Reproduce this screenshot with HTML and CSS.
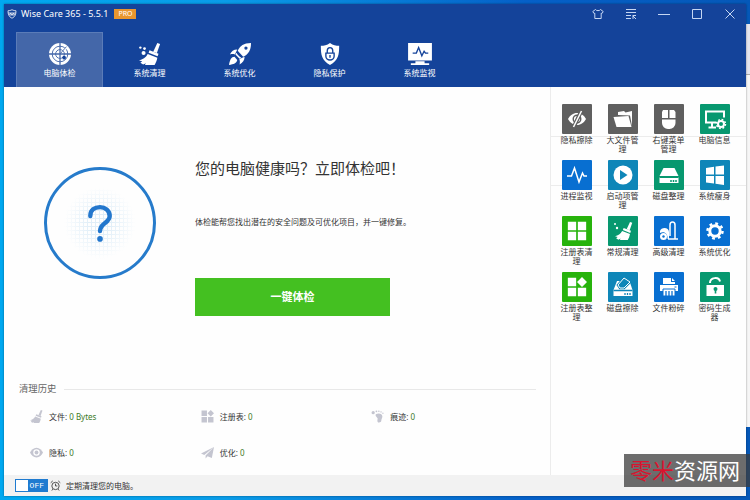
FILE: index.html
```html
<!DOCTYPE html>
<html lang="zh-CN">
<head>
    <meta charset="UTF-8">
    <meta name="viewport" content="width=device-width, initial-scale=1.0">
    <title>Wise Care 365</title>
    <link rel="stylesheet" href="styles.css">
</head>
<body>
<svg class="sprite" aria-hidden="true">
    <!-- 共用圖示 -->
    <symbol id="i-broom" viewBox="0 0 24 24">
        <path d="M20 0l3 1-3.500 10-4-1.500z"/>
        <path d="M11.500 8l9.800 3.700-1 2.800-9.800-3.800z"/>
        <path d="M9.500 12l10.500 4c-.5 3-1.500 5.500-3 8H6.500l1-2-3 1.500-3-2 2-1.500-3.500-1c4-1 7.500-3 9.500-7z"/>
    </symbol>
    <symbol id="i-grid" viewBox="0 0 24 24">
        <path d="M1 1h10v10H1zM13 1h10v10H13zM1 13h10v10H1zM13 13h10v10H13z"/>
    </symbol>
    <symbol id="i-blocks" viewBox="0 0 24 24">
        <path d="M1 1h10v10H1zM1 13h10v10H1zM13 13h10v10H13zM18 0l6 6-6 6-6-6z"/>
    </symbol>
</svg>

<div class="behind"></div>

<div class="window">
    <header>
        <div class="titlebar">
            <svg class="logo" viewBox="0 0 20 20"><path d="M10 1.500c3 1.500 5.500 2 8 2 0 7-1.500 12-8 15-6.500-3-8-8-8-15 2.500 0 5-.5 8-2z" fill="none" stroke="#fff" stroke-width="1.500"/><path d="M2 8h16M5 12l2-4 3 4 3-4 2 4z" fill="none" stroke="#fff" stroke-width="1.500"/></svg>
            <h1>Wise Care 365 - 5.5.1</h1>
            <span class="pro">PRO</span>
            <div class="controls">
                <button aria-label="皮肤"><svg viewBox="0 0 12 12"><path d="M3.500 1.500L.8 3.500l1.200 2 .8-.3v5.300h6.400V5.200l.8.3 1.200-2-2.700-2C8 3 4 3 3.500 1.500z"/></svg></button>
                <button aria-label="菜单"><svg viewBox="0 0 12 12"><path d="M1 1.500h10M1 4.500h10M1 7.500h5M1 10.500h5M7.500 7.500h3.500M8 11V8l3 3"/></svg></button>
                <button aria-label="最小化"><svg viewBox="0 0 12 12"><path d="M0 6.500h12"/></svg></button>
                <button aria-label="最大化"><svg viewBox="0 0 12 12"><path d="M1.500 1.500h9v9h-9z"/></svg></button>
                <button aria-label="关闭"><svg viewBox="0 0 12 12"><path d="M1.500 1.500l9 9M10.500 1.500l-9 9"/></svg></button>
            </div>
        </div>
        <nav>
            <button class="tab active">
                <svg viewBox="0 0 24 24"><circle cx="12" cy="12" r="12" fill="#fff"/><g fill="none" stroke="#4467a9"><circle cx="12" cy="12" r="8.500"/><circle cx="12" cy="12" r="4.800"/><path d="M12 0v24M0 12h24" stroke-width="1.400"/></g><path d="M13 11l5-7 2 2z" fill="#fff"/><path d="M12 12l7-8" stroke="#4467a9"/><circle cx="16.500" cy="16" r="2" fill="#16449b"/></svg>
                电脑体检
            </button>
            <button class="tab">
                <svg viewBox="0 0 24 24" fill="#fff"><use href="#i-broom"/><circle cx="1.500" cy="5" r="1.300"/><circle cx="6" cy="6" r="1.500"/><circle cx="5" cy="11" r="2.200"/></svg>
                系统清理
            </button>
            <button class="tab">
                <svg viewBox="0 0 24 24" fill="#fff"><path d="M24 0c-8 .3-12 3-14.500 8.500l6 6.500C21.500 12 24 8 24 0z"/><circle cx="18.500" cy="5.500" r="1.800" fill="#16449b"/><path d="M9 7c-4 0-6.500 2-8 5.500 2-.5 4-.5 5.500 0zM17 15c0 4-2 6.500-5.500 8.500.5-2 .5-4-.2-6z"/><path d="M8 10.500c1.500 2.500 3 4 5.500 5.500l-2 1.200-4.500-4.700zM6 15c-3.500 0-5 3-6 9 5-1 8.500-2 9-5.500z"/></svg>
                系统优化
            </button>
            <button class="tab">
                <svg viewBox="0 0 24 24"><path d="M12 0c3.500 2.500 6.500 3 10 3 0 10-1 16-10 21C3 19 2 13 2 3c3.500 0 6.500-.5 10-3z" fill="#fff"/><path d="M9 11V8.500a3 3.500 0 0 1 6 0V11M7.500 11h9v3.500a4.500 4 0 0 1-9 0zM12 13v3" fill="none" stroke="#16449b" stroke-width="1.500"/></svg>
                隐私保护
            </button>
            <button class="tab">
                <svg class="wide" viewBox="0 0 28 24"><path d="M1 0h26v19H1zM4 22h20v2H4zM9 20h10v2H9z" fill="#fff"/><path d="M6 11h4l2.500-6 3.500 9 2.500-5 1.500 2h3" fill="none" stroke="#16449b" stroke-width="1.500"/></svg>
                系统监视
            </button>
        </nav>
    </header>

    <div class="content">
        <main>
            <section class="hero">
                <div class="status">
                    <svg viewBox="0 0 34 44"><path d="M6 14C6 7 11 4 17 4s11 4 11 10c0 8-11 8-11 17" fill="none" stroke="#2377cd" stroke-width="5" stroke-linecap="round"/><circle cx="17" cy="40" r="3.200" fill="#2377cd"/></svg>
                </div>
                <div class="intro">
                    <h2>您的电脑健康吗？立即体检吧！</h2>
                    <p>体检能帮您找出潜在的安全问题及可优化项目，并一键修复。</p>
                    <button class="btn">一键体检</button>
                </div>
            </section>

            <section class="history">
                <h3>清理历史</h3>
                <ul>
                    <li><svg viewBox="0 0 24 24"><use href="#i-broom"/></svg>文件: <b>0 Bytes</b></li>
                    <li><svg viewBox="0 0 24 24"><use href="#i-blocks"/></svg>注册表: <b>0</b></li>
                    <li><svg viewBox="0 0 24 24"><circle cx="4" cy="5" r="3"/><circle cx="10" cy="2.500" r="1.600"/><circle cx="14.500" cy="2.500" r="1.400"/><circle cx="18.500" cy="3.500" r="1.300"/><circle cx="22" cy="6" r="1.200"/><path d="M9 8c4-3 12-2 12 4 0 3-2 4-2 8 0 3-6 5-7 1-.8-3 1-4 0-6s-5-4-3-7z"/></svg>痕迹: <b>0</b></li>
                    <li><svg viewBox="0 0 24 24"><path d="M12 3c5.500 0 9.500 4 12 9-2.500 5-6.500 9-12 9S2.500 17 0 12c2.500-5 6.500-9 12-9z"/><circle cx="12" cy="12" r="6" fill="#fff"/><circle cx="12" cy="12" r="3.500"/></svg>隐私: <b>0</b></li>
                    <li><svg viewBox="0 0 24 24"><path d="M24 2L0 14l6 2.500zM24 2L8.500 17.500V23l3.500-4 8 3z"/></svg>优化: <b>0</b></li>
                </ul>
            </section>
        </main>

        <aside>
            <button class="tile"><svg class="gray" viewBox="0 0 30 30"><path d="M15 9c4 0 7 2.500 9 6-2 3.500-5 6-9 6s-7-2.500-9-6c2-3.500 5-6 9-6z"/><circle cx="15" cy="15" r="3.800" fill="none" stroke="#5f5f5f" stroke-width="1.400"/><path d="M19.500 6.500l-8 17" stroke="#5f5f5f" stroke-width="4"/><path d="M19.500 7l-8 16" stroke="#fff" stroke-width="1.500"/></svg>隐私擦除</button>
            <button class="tile"><svg class="gray" viewBox="0 0 30 30"><path d="M10 11V8l6-1 1.500 1.500L24 7v15l-2-10.500z"/><path d="M5.500 13l15-1 3 11H8.500z"/></svg>大文件管理</button>
            <button class="tile"><svg class="gray" viewBox="0 0 30 30"><path d="M9 6h5v8H8V8zM15.500 6h4.500l1.500 2v6h-6zM8 15.500h13.500V19a6 6 0 0 1-6 6H14a6 6 0 0 1-6-6z"/></svg>右键菜单管理</button>
            <button class="tile"><svg class="teal" viewBox="0 0 30 30"><path d="M16 18.500H6V7.500h18v6M12 19v4M8.500 23.500H16" fill="none" stroke="#fff" stroke-width="2"/><circle cx="21" cy="20" r="3" fill="none" stroke="#fff" stroke-width="2"/><circle cx="21" cy="20" r="4.500" fill="none" stroke="#fff" stroke-width="1.500" stroke-dasharray="1.800 1.734"/></svg>电脑信息</button>
            <button class="tile"><svg class="blue" viewBox="0 0 30 30"><path d="M5 16h4.500l3-8 4.500 14 3.500-9 1.500 3H25" fill="none" stroke="#fff" stroke-width="1.500"/></svg>进程监视</button>
            <button class="tile"><svg class="cyan" viewBox="0 0 30 30"><circle cx="15" cy="15" r="9.500"/><path d="M12 10l7.500 5-7.500 5z" fill="#0e86b8"/></svg>启动项管理</button>
            <button class="tile"><svg class="teal" viewBox="0 0 30 30"><path d="M9.500 8h11l4 8h-19zM5.500 17h19v6h-19z"/><path d="M5.500 17.500h19" stroke="#07986f"/><path d="M17 20v2M19.500 20v2M22 20v2" stroke="#07986f" stroke-width="1.500"/></svg>磁盘整理</button>
            <button class="tile"><svg class="cyan" viewBox="0 0 30 30"><path d="M6 8l8-1.200V14.500H6zM15.500 6.500L24 5.500v9h-8.500zM6 16h8v7.500L6 22.500zM15.500 16H24v9l-8.500-1.300z"/></svg>系统瘦身</button>
            <button class="tile"><svg class="green" viewBox="0 0 30 30"><use href="#i-grid" x="5" y="5" width="20" height="20"/></svg>注册表清理</button>
            <button class="tile"><svg class="teal" viewBox="0 0 30 30"><use href="#i-broom" x="7" y="6" width="18" height="18"/><circle cx="7" cy="8" r="1"/><circle cx="9" cy="12" r="1.200"/></svg>常规清理</button>
            <button class="tile"><svg class="blue" viewBox="0 0 30 30"><path d="M14 23h10M16 20V9c0-4 5-4 5 0v14" fill="none" stroke="#fff" stroke-width="1.500"/><path d="M6 17v-2c1-4 9-4 9 1v7h-1.500C14 17 10 15 6 17z"/><circle cx="9.500" cy="20.500" r="3.500"/><circle cx="9.500" cy="20.500" r="1.200" fill="#086fd1"/></svg>高级清理</button>
            <button class="tile"><svg class="blue" viewBox="0 0 30 30"><circle cx="15" cy="15" r="5.200" fill="none" stroke="#fff" stroke-width="3"/><circle cx="15" cy="15" r="7.500" fill="none" stroke="#fff" stroke-width="2.500" stroke-dasharray="2.800 3.090"/></svg>系统优化</button>
            <button class="tile"><svg class="green" viewBox="0 0 30 30"><use href="#i-blocks" x="5" y="5" width="20" height="20"/></svg>注册表整理</button>
            <button class="tile"><svg class="cyan" viewBox="0 0 30 30"><path d="M9 9l-3.500 9v6h19v-6L21.500 9"/><path d="M5.500 18.500h19M17 21v2M19.500 21v2M22 21v2" stroke="#0e86b8" stroke-width="1.300"/><path d="M10 13l6-7 6 4-6 6h-4z" stroke="#0e86b8" stroke-width="2.500"/><path d="M10 13l6-7 6 4-6 6h-4z" fill="#0e86b8" stroke="#fff"/></svg>磁盘擦除</button>
            <button class="tile"><svg class="blue" viewBox="0 0 30 30"><path d="M9 6h8v4h4v2H9zM18 6l3 3h-3zM6 13h18v6H6z"/><path d="M9 17h12v7H9z" stroke="#086fd1"/><path d="M12 19v6M15 19v6M18 19v6" stroke="#086fd1" stroke-width="1.300"/><path d="M20.500 15h2" stroke="#086fd1"/></svg>文件粉碎</button>
            <button class="tile"><svg class="teal" viewBox="0 0 30 30"><path d="M10 11c0-6 9-6.500 10-1.500" fill="none" stroke="#fff" stroke-width="2"/><path d="M6.500 13h17.500v11H6.500z"/><circle cx="15.500" cy="17" r="2" fill="#07986f"/><path d="M15.500 17v4.500" stroke="#07986f" stroke-width="1.600"/></svg>密码生成器</button>
        </aside>
    </div>

    <footer>
        <label class="schedule">
            <input type="checkbox">
            <span class="switch">OFF</span>
            <svg viewBox="0 0 12 12"><circle cx="6" cy="6.500" r="4"/><path d="M6 4v2.500h2M.8 3L3 1M11.200 3L9 1M3 10l-1 1.500M9 10l1 1.500"/></svg>
            定期清理您的电脑。
        </label>
    </footer>
</div>

<div class="watermark"><em>零米</em>资源网</div>
</body>
</html>
```
FILE: styles.css
```css
* {
    box-sizing: border-box;
}
body {
    font-family: "Noto Sans", "Noto Sans CJK SC", sans-serif;
    font-size: 8px;
    line-height: 12px;
    color: #333;
    background: linear-gradient(90deg, #00a8f0, #0a9ce8 30%, #0560c8 70%, #0558b8);
    margin: 0;
    padding: 4px;
    min-height: 100vh;
    display: flex;
}
h1, h2, h3, p, ul {
    margin: 0;
    padding: 0;
    font-weight: normal;
}
button {
    font: inherit;
    color: inherit;
    background: none;
    border: none;
    padding: 0;
    cursor: pointer;
}
.sprite {
    position: absolute;
    width: 0;
    height: 0;
}
/* 後方的視窗邊緣 */
.behind {
    position: absolute;
    top: 24px;
    right: 0;
    bottom: 73px;
    width: 20px;
    background: linear-gradient(#e4e5ef 50px, #aaa 50px, #aaa 51px, #f6f6f6 51px);
}
.window {
    position: relative;
    flex: 1;
    display: flex;
    flex-direction: column;
    background: #fefefe;
    box-shadow: 0 0 2px rgba(0, 0, 0, 0.4);
}
header {
    background: #14439a;
    color: #fff;
}
.titlebar {
    display: flex;
    align-items: center;
    height: 20px;
    padding: 0 0 0 3px;
}
.logo {
    width: 10px;
    height: 10px;
    margin-right: 4px;
}
h1 {
    font-size: 9px;
}
.pro {
    margin-left: 6px;
    padding: 0 4px;
    font-size: 7px;
    line-height: 10px;
    background: #e8962e;
}
.controls {
    display: flex;
    margin-left: auto;
}
.controls button {
    display: flex;
    justify-content: center;
    width: 33px;
    padding: 4px 0;
}
.controls svg {
    width: 12px;
    height: 12px;
    fill: none;
    stroke: #c5d6f2;
}
nav {
    display: flex;
    gap: 3px;
    padding: 8px 12px 0;
}
.tab {
    display: flex;
    flex-direction: column;
    align-items: center;
    gap: 2px;
    width: 87px;
    height: 55px;
    padding-top: 10px;
    border: 1px solid transparent;
    border-bottom: none;
}
.tab svg {
    width: 22px;
    height: 22px;
}
.tab svg.wide {
    width: 26px;
}
.tab.active {
    background: #4467a9;
    border-color: #5b7cb8;
}
.content {
    flex: 1;
    display: flex;
}
main {
    flex: 1;
    display: flex;
    flex-direction: column;
    justify-content: space-between;
}
.hero {
    display: flex;
    gap: 39px;
    padding: 71px 15px 0 40px;
}
.status {
    display: flex;
    align-items: center;
    justify-content: center;
    width: 112px;
    height: 112px;
    margin-top: 9px;
    border: 3px solid #267bcb;
    border-radius: 50%;
    background:
        radial-gradient(circle, transparent 10px, #fefefe 36px),
        repeating-linear-gradient(90deg, #e0eef8 0 1px, transparent 1px 4px),
        repeating-linear-gradient(#e0eef8 0 1px, #fefefe 1px 4px);
}
.status svg {
    width: 30px;
    height: 40px;
}
h2 {
    font-size: 15px;
    line-height: 20px;
}
.intro p {
    margin: 38px 0 50px;
}
.btn {
    display: block;
    width: 195px;
    padding: 10px 0;
    font-size: 11px;
    line-height: 18px;
    font-weight: bold;
    color: white;
    background: #44c021;
}
.btn:hover {
    background: #3bad1c;
}
.history {
    padding: 0 14px 16px 15px;
}
h3 {
    display: flex;
    align-items: center;
    gap: 8px;
    color: #666;
}
h3::after {
    content: "";
    flex: 1;
    height: 1px;
    background: #e8e8e8;
}
.history ul {
    display: grid;
    grid-template-columns: repeat(3, 1fr);
    gap: 23px 6px;
    padding: 15px 0 0 11px;
    list-style: none;
}
.history li {
    display: flex;
    align-items: center;
    white-space: pre;
}
.history svg {
    width: 13px;
    height: 13px;
    margin-right: 6px;
    fill: #c4c5d0;
}
.history b {
    font-weight: normal;
    color: #3c7a28;
}
aside {
    display: grid;
    grid-template-columns: repeat(4, 46px);
    grid-auto-rows: 56px;
    align-content: start;
    justify-content: center;
    width: 196px;
    padding: 17px 6px 0 0;
    border-left: 1px solid #ececec;
    background: linear-gradient(transparent 49px, #ececec 49px, #ececec 50px, transparent 50px, transparent 98px, #ececec 98px, #ececec 99px, transparent 99px);
}
.tile {
    display: flex;
    flex-direction: column;
    align-items: center;
    justify-content: start;
    gap: 1px;
    padding: 0 6px;
    line-height: 9px;
}
.tile svg {
    flex: none;
    width: 30px;
    height: 30px;
    border-radius: 1px;
    fill: #fff;
}
.gray {
    background: #5f5f5f;
}
.teal {
    background: #07986f;
}
.blue {
    background: #086fd1;
}
.cyan {
    background: #0e86b8;
}
.green {
    background: #27b30c;
}
footer {
    padding: 4px 11px;
    background: #f2f2f2;
}
.schedule {
    display: flex;
    align-items: center;
}
.schedule input {
    position: absolute;
    opacity: 0;
}
.switch {
    width: 33px;
    padding-right: 3px;
    border: 1px solid #1f7bd0;
    background: linear-gradient(90deg, #fff 12px, #1f7bd0 12px);
    color: #fff;
    font-family: "Liberation Mono", monospace;
    font-size: 8px;
    line-height: 11px;
    text-align: right;
}
.schedule svg {
    width: 11px;
    height: 11px;
    margin: 0 5px 0 2px;
    fill: none;
    stroke: #444;
}
.watermark {
    position: absolute;
    right: 0;
    bottom: 13px;
    padding: 0 10px 0 6px;
    background: rgba(60, 60, 60, 0.75);
    color: #fff;
    font-size: 22px;
    line-height: 33px;
}
.watermark em {
    font-style: normal;
    color: #d9142f;
}
```
